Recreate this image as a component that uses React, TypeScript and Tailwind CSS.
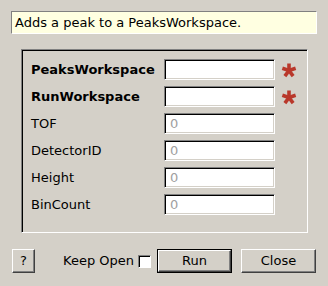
import React from "react";

const font = { fontFamily: '"DejaVu Sans", Verdana, sans-serif' };

type Prop = { name: string; required?: boolean; placeholder?: string };

const props: Prop[] = [
  { name: "PeaksWorkspace", required: true },
  { name: "RunWorkspace", required: true },
  { name: "TOF", placeholder: "0" },
  { name: "DetectorID", placeholder: "0" },
  { name: "Height", placeholder: "0" },
  { name: "BinCount", placeholder: "0" },
];

function Star() {
  const arms = [-90, -18, 54, 126, 198];
  return (
    <svg width="16" height="16" viewBox="0 0 16 16" className="ml-[6px]">
      {arms.map((a) => {
        const r = (a * Math.PI) / 180;
        return (
          <line
            key={a}
            x1="8"
            y1="8.5"
            x2={8 + Math.cos(r) * 7}
            y2={8.5 + Math.sin(r) * 7}
            stroke="#b9382b"
            strokeWidth="3.6"
          />
        );
      })}
    </svg>
  );
}

function Button({ label, wide, isDefault }: { label: string; wide?: boolean; isDefault?: boolean }) {
  const inner = (
    <div
      className={`flex h-full items-center justify-center border-t border-l border-t-white border-l-white border-r border-b border-r-[#404040] border-b-[#404040] shadow-[inset_-1px_-1px_0_#808080] ${
        wide ? "w-full" : "w-[23px]"
      }`}
    >
      {label}
    </div>
  );
  if (isDefault)
    return <div className="h-[24px] w-[75px] border border-black">{inner}</div>;
  return <div className={`h-[24px] ${wide ? "w-[75px]" : "w-[23px]"}`}>{inner}</div>;
}

export default function App() {
  return (
    <div
      className="flex h-[286px] w-[328px] flex-col bg-[#d4d0c8] text-[13px] text-black"
      style={font}
    >
      <div className="mx-[11px] mt-[11px] flex h-[23px] items-center border border-t-[#808080] border-l-[#808080] border-r-white border-b-white bg-[#ffffe1] pl-[3px]">
        Adds a peak to a PeaksWorkspace.
      </div>

      <div className="mt-[15px] ml-[21px] mr-[20px] h-[184px] border border-t-[#808080] border-l-[#808080] border-r-white border-b-white">
        <div className="flex h-full flex-col gap-[6px] border-t border-l border-t-black border-l-black pt-[8px] pl-[8px]">
          {props.map((p) => (
            <div key={p.name} className="flex h-[21px] items-center">
              <span className={`w-[133px] ${p.required ? "font-bold" : ""}`}>{p.name}</span>
              <div className="flex h-[21px] w-[111px] items-center border border-t-[#808080] border-l-[#808080] border-r-white border-b-white bg-white pl-[5px] shadow-[inset_1px_1px_0_#000,inset_-1px_-1px_0_#d4d0c8] text-[#a0a0a0]">
                {p.placeholder}
              </div>
              {p.required && <Star />}
            </div>
          ))}
        </div>
      </div>

      <div className="mt-[16px] flex h-[24px] items-center pl-[12px]">
        <Button label="?" />
        <span className="w-[99px] shrink-0 whitespace-nowrap text-right">Keep Open</span>
        <div className="ml-[4px] h-[13px] w-[13px] shrink-0 border border-t-[#808080] border-l-[#808080] border-r-white border-b-white bg-white shadow-[inset_1px_1px_0_#000]" />
        <div className="ml-[6px]">
          <Button label="Run" wide isDefault />
        </div>
        <div className="ml-[9px]">
          <Button label="Close" wide />
        </div>
      </div>
    </div>
  );
}
